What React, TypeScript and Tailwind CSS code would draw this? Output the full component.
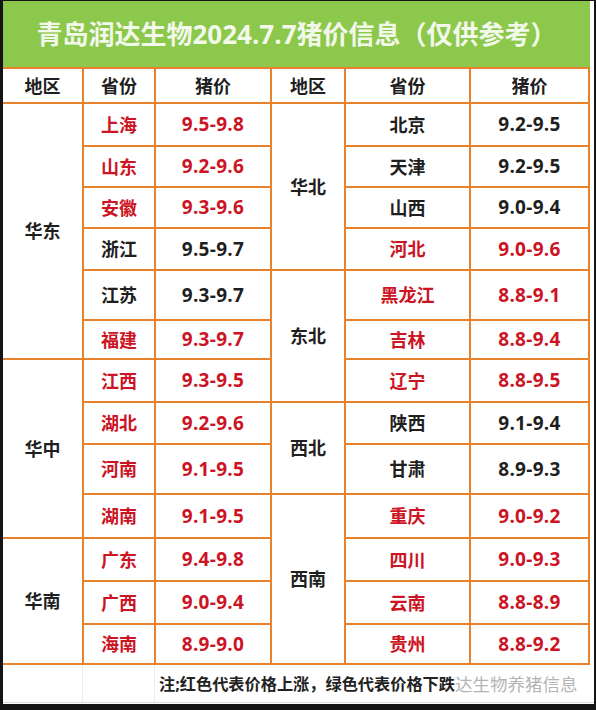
import React from "react";

const R = "#cc1424";
const K = "#1f1f1f";

type Row = { p: string; v: string; red: boolean };

const left: Row[] = [
  { p: "上海", v: "9.5-9.8", red: true },
  { p: "山东", v: "9.2-9.6", red: true },
  { p: "安徽", v: "9.3-9.6", red: true },
  { p: "浙江", v: "9.5-9.7", red: false },
  { p: "江苏", v: "9.3-9.7", red: false },
  { p: "福建", v: "9.3-9.7", red: true },
  { p: "江西", v: "9.3-9.5", red: true },
  { p: "湖北", v: "9.2-9.6", red: true },
  { p: "河南", v: "9.1-9.5", red: true },
  { p: "湖南", v: "9.1-9.5", red: true },
  { p: "广东", v: "9.4-9.8", red: true },
  { p: "广西", v: "9.0-9.4", red: true },
  { p: "海南", v: "8.9-9.0", red: true },
];

const right: Row[] = [
  { p: "北京", v: "9.2-9.5", red: false },
  { p: "天津", v: "9.2-9.5", red: false },
  { p: "山西", v: "9.0-9.4", red: false },
  { p: "河北", v: "9.0-9.6", red: true },
  { p: "黑龙江", v: "8.8-9.1", red: true },
  { p: "吉林", v: "8.8-9.4", red: true },
  { p: "辽宁", v: "8.8-9.5", red: true },
  { p: "陕西", v: "9.1-9.4", red: false },
  { p: "甘肃", v: "8.9-9.3", red: false },
  { p: "重庆", v: "9.0-9.2", red: true },
  { p: "四川", v: "9.0-9.3", red: true },
  { p: "云南", v: "8.8-8.9", red: true },
  { p: "贵州", v: "8.8-9.2", red: true },
];

const leftGroups = [
  { name: "华东", start: 2, span: 6 },
  { name: "华中", start: 8, span: 4 },
  { name: "华南", start: 12, span: 3 },
];
const rightGroups = [
  { name: "华北", start: 2, span: 4 },
  { name: "东北", start: 6, span: 3 },
  { name: "西北", start: 9, span: 2 },
  { name: "西南", start: 11, span: 4 },
];

const font = {
  fontFamily: '"Open Sans", "Noto Sans CJK SC", sans-serif',
};

function Cell({
  children,
  col,
  row,
  span = 1,
  color = K,
  num = false,
}: {
  children: React.ReactNode;
  col: number;
  row: number;
  span?: number;
  color?: string;
  num?: boolean;
}) {
  return (
    <div
      className={
        "bg-white flex items-center justify-center font-bold leading-none " +
        (num ? "text-[19px] tracking-[0.3px]" : "text-[18px]")
      }
      style={{ gridColumn: col, gridRow: `${row} / span ${span}`, color }}
    >
      {children}
    </div>
  );
}

export default function App() {
  return (
    <div
      className="w-[596px] h-[710px] bg-[#141414] pl-[3px] pr-[2px] pt-[1px] pb-[6px]"
      style={font}
    >
      <div className="w-full h-full bg-white flex flex-col">
        <div className="h-[66px] bg-[#8cc84c] flex items-center justify-center mr-[4px]">
          <span className="text-[26px] font-bold text-[#f3f9ea] whitespace-nowrap">
            青岛润达生物2024.7.7猪价信息（仅供参考）
          </span>
        </div>
        <div
          className="grid bg-[#e8812c] gap-[2px] pt-[2px] pb-[2px] pr-[2px] mr-[4px]"
          style={{
            gridTemplateColumns: "79px 70px 114px 72px 123px 1fr",
            gridTemplateRows:
              "33px 41px 39px 39px 40px 48px 37px 41px 40px 48px 42px 41px 41px 38px",
          }}
        >
          {["地区", "省份", "猪价", "地区", "省份", "猪价"].map((h, i) => (
            <Cell key={i} col={i + 1} row={1}>
              {h}
            </Cell>
          ))}
          {leftGroups.map((g) => (
            <Cell key={g.name} col={1} row={g.start} span={g.span}>
              {g.name}
            </Cell>
          ))}
          {rightGroups.map((g) => (
            <Cell key={g.name} col={4} row={g.start} span={g.span}>
              {g.name}
            </Cell>
          ))}
          {left.map((r, i) => (
            <React.Fragment key={"l" + i}>
              <Cell col={2} row={i + 2} color={r.red ? R : K}>
                {r.p}
              </Cell>
              <Cell col={3} row={i + 2} color={r.red ? R : K} num>
                {r.v}
              </Cell>
            </React.Fragment>
          ))}
          {right.map((r, i) => (
            <React.Fragment key={"r" + i}>
              <Cell col={5} row={i + 2} color={r.red ? R : K}>
                {r.p}
              </Cell>
              <Cell col={6} row={i + 2} color={r.red ? R : K} num>
                {r.v}
              </Cell>
            </React.Fragment>
          ))}
        </div>
        <div className="flex-1 flex border-b border-[#dcdcdc] mb-[1px]">
          <div className="w-[80px] border-r border-[#ececec]" />
          <div className="w-[72px] border-r border-[#ececec]" />
          <div className="flex-1 flex items-center pl-[4px] pt-[2px]">
            <span className="text-[16.2px] font-bold text-[#222] whitespace-nowrap">
              注;红色代表价格上涨，绿色代表价格下跌
            </span>
            <span className="text-[17.5px] text-[#b4b4b4] whitespace-nowrap">
              达生物养猪信息
            </span>
          </div>
        </div>
      </div>
    </div>
  );
}
